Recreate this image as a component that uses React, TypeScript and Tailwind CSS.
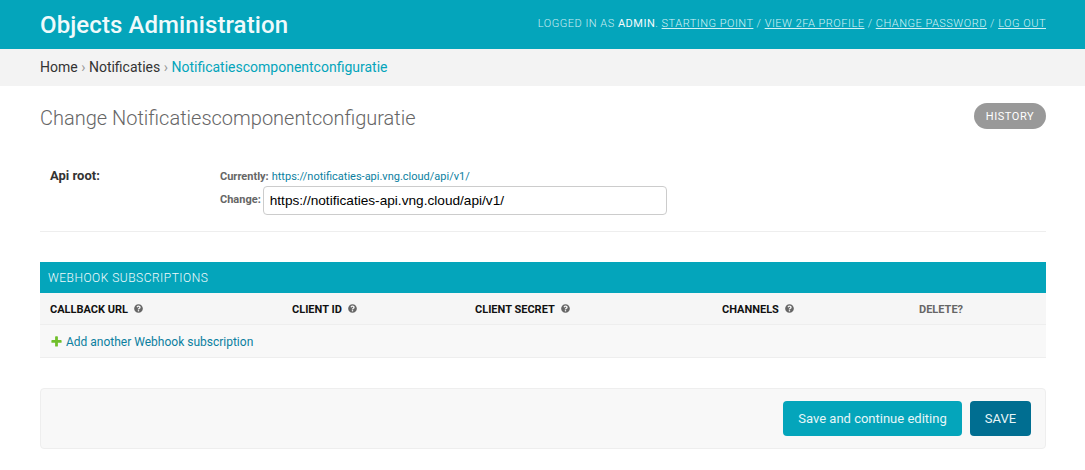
import { FaQuestionCircle } from "react-icons/fa";

const COLUMNS = ["CALLBACK URL", "CLIENT ID", "CLIENT SECRET", "CHANNELS"];

const PlusIcon = () => (
  <svg viewBox="0 0 1792 1792" className="w-[13px] h-[13px] shrink-0" fill="#70bf2b">
    <path d="M1600 796v192q0 40-28 68t-68 28h-416v416q0 40-28 68t-68 28h-192q-40 0-68-28t-28-68v-416h-416q-40 0-68-28t-28-68v-192q0-40 28-68t68-28h416v-416q0-40 28-68t68-28h192q40 0 68 28t28 68v416h416q40 0 68 28t28 68z" />
  </svg>
);

const App = () => {
  return (
    <div className="w-[1085px] h-[470px] overflow-hidden bg-white font-['Roboto',sans-serif] text-[14px] text-[#333]">
      {/* Header */}
      <div className="h-[49px] bg-[#04a5bb] pl-10 pr-[39px] flex items-center justify-between">
        <div className="text-[24px] font-medium tracking-[0.09px] leading-none text-[#f0fafb]">
          Objects Administration
        </div>
        <div className="text-[11px] tracking-[0.5px] uppercase text-[#c9edf2] font-light">
          Logged in as <strong className="font-normal text-[#f5fcfd]">admin</strong>.{" "}
          <a className="underline text-[#d5f2f6]">Starting point</a> /{" "}
          <a className="underline text-[#d5f2f6]">View 2FA profile</a> /{" "}
          <a className="underline text-[#d5f2f6]">Change password</a> /{" "}
          <a className="underline text-[#d5f2f6]">Log out</a>
        </div>
      </div>

      {/* Breadcrumbs */}
      <div className="h-[37px] bg-[#f3f3f3] px-10 flex items-center text-[14px] text-[#999]">
        <a className="text-[#333]">Home</a>
        <span className="mx-[3.5px]">›</span>
        <a className="text-[#333]">Notificaties</a>
        <span className="mx-[3.5px]">›</span>
        <span className="text-[#04a5bb]">Notificatiescomponentconfiguratie</span>
      </div>

      <div className="pl-10 pr-[39px]">
        {/* Title */}
        <div className="flex items-center justify-between pt-[17px] h-[43px]">
          <h1 className="text-[20px] font-light text-[#666] leading-[26px] mt-[4px]">
            Change Notificatiescomponentconfiguratie
          </h1>
          <a className="h-[26px] w-[72px] pt-[2px] rounded-full bg-[#999] text-white text-[11px] tracking-[0.55px] flex items-center justify-center">
            HISTORY
          </a>
        </div>

        {/* Form row */}
        <div className="flex pl-[10px] pt-[39px] h-[63px] border-b border-[#eee] box-content">
          <label className="w-[170px] text-[13px] font-bold leading-[16px]">Api root:</label>
          <div className="text-[11px] text-[#666]">
            <div className="h-[18px] flex items-center gap-[3px]">
              <span className="font-bold">Currently:</span>
              <a className="text-[#0b7f9f]">https://notificaties-api.vng.cloud/api/v1/</a>
            </div>
            <div className="flex items-center gap-[2px]">
              <span className="font-bold">Change:</span>
              <input
                type="text"
                readOnly
                value="https://notificaties-api.vng.cloud/api/v1/"
                className="w-[404px] h-[29px] border border-[#ccc] rounded-[4px] px-[6px] text-[13.65px] text-black outline-none font-['Liberation_Sans',sans-serif]"
              />
            </div>
          </div>
        </div>

        {/* Inline group */}
        <div className="mt-[30px]">
          <div className="h-[31px] bg-[#04a5bb] px-[8px] flex items-center text-[12px] font-light tracking-[0.5px] text-[#f0fafb]">
            WEBHOOK SUBSCRIPTIONS
          </div>
          <div className="h-[32px] pt-[3px] bg-[#f6f6f6] border-b border-[#eee] pl-[10px] grid grid-cols-[242px_183px_247px_197px_1fr] items-center text-[11px] font-bold text-[#111]">
            {COLUMNS.map((col) => (
              <div key={col} className="flex items-center gap-[6px]">
                {col}
                <FaQuestionCircle className="w-[9px] h-[9px] text-[#666] -mt-[3px]" />
              </div>
            ))}
            <div className="text-[#666]">DELETE?</div>
          </div>
          <div className="h-[33px] pt-[1px] bg-[#f8f8f8] border-b border-[#eee] pl-[10px] flex items-center gap-[3px] text-[12px] text-[#0b7f9f]">
            <PlusIcon />
            <a>Add another Webhook subscription</a>
          </div>
        </div>

        {/* Submit row */}
        <div className="mt-[30px] h-[61px] bg-[#f8f8f8] border border-[#eee] rounded-[4px] flex items-center justify-end gap-[8px] pr-[14px]">
          <button className="w-[179px] h-[35px] rounded-[4px] bg-[#04a5bb] text-[13px] text-[#e6f6f8]">
            Save and continue editing
          </button>
          <button className="w-[61px] h-[35px] rounded-[4px] bg-[#006e91] text-[13px] text-[#e6f6f8]">
            SAVE
          </button>
        </div>
      </div>
    </div>
  );
};

export default App;
